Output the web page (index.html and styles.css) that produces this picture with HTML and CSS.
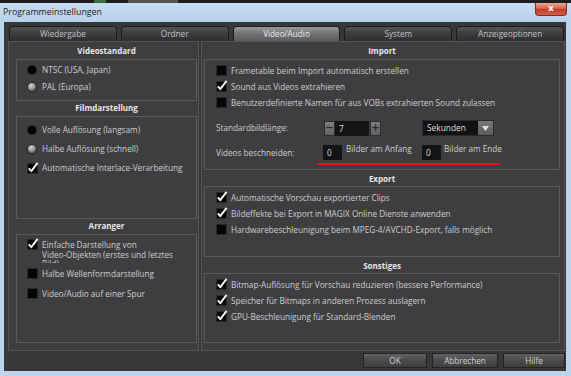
FILE: index.html
```html
<!DOCTYPE html>
<html>
<head>
<meta charset="utf-8">
<title>Programmeinstellungen</title>
<link rel="stylesheet" href="styles.css">
</head>
<body>
<div class="desk"><span class="desk-a"></span><span class="desk-b"></span></div>
<div class="titlebar">
  <span class="title">Programmeinstellungen</span>
  <div class="close">x</div>
</div>
<div class="client">
  <div class="tabs">
    <div class="tab">Wiedergabe</div>
    <div class="tab">Ordner</div>
    <div class="tab active">Video/Audio</div>
    <div class="tab">System</div>
    <div class="tab">Anzeigeoptionen</div>
  </div>
  <div class="content">
    <div class="panel left">
      <div class="hdr">Videostandard</div>
      <div class="group g-std">
        <div class="row r17"><svg class="radio" width="10" height="10" viewBox="0 0 10 10"><circle cx="5" cy="5" r="4.6" fill="#000" stroke="#2a2a2a" stroke-width="0.6"/></svg>NTSC (USA, Japan)</div>
        <div class="row r17"><svg class="radio" width="10" height="10" viewBox="0 0 10 10"><defs><radialGradient id="rg1" cx="0.4" cy="0.35" r="0.7"><stop offset="0" stop-color="#d4d4d4"/><stop offset="0.6" stop-color="#8a8a8a"/><stop offset="1" stop-color="#4a4a4a"/></radialGradient></defs><circle cx="5" cy="5" r="4.6" fill="url(#rg1)" stroke="#1a1a1a" stroke-width="0.8"/></svg>PAL (Europa)</div>
      </div>
      <div class="hdr">Filmdarstellung</div>
      <div class="group g-film">
        <div class="row r19"><svg class="radio" width="10" height="10" viewBox="0 0 10 10"><circle cx="5" cy="5" r="4.6" fill="#000" stroke="#2a2a2a" stroke-width="0.6"/></svg>Volle Auflösung (langsam)</div>
        <div class="row r19"><svg class="radio" width="10" height="10" viewBox="0 0 10 10"><circle cx="5" cy="5" r="4.6" fill="url(#rg1)" stroke="#1a1a1a" stroke-width="0.8"/></svg>Halbe Auflösung (schnell)</div>
        <div class="row r19"><svg class="cb" width="12" height="12" viewBox="0 0 12 12"><rect x="0.5" y="1.5" width="10" height="10" fill="#050505" stroke="#2a2a2a"/><path d="M1.8 6.4 L4.3 9.2 L10.6 0.9" fill="none" stroke="#f2f2f2" stroke-width="2" stroke-linejoin="round"/></svg>Automatische Interlace-Verarbeitung</div>
      </div>
      <div class="hdr">Arranger</div>
      <div class="group g-arr">
        <div class="row r26 top"><svg class="cb cb-top" width="12" height="12" viewBox="0 0 12 12"><rect x="0.5" y="1.5" width="10" height="10" fill="#050505" stroke="#2a2a2a"/><path d="M1.8 6.4 L4.3 9.2 L10.6 0.9" fill="none" stroke="#f2f2f2" stroke-width="2" stroke-linejoin="round"/></svg><span class="multi">Einfache Darstellung von<br>Video-Objekten (erstes und letztes<br>Bild)</span></div>
        <div class="row r20"><svg class="cb" width="12" height="12" viewBox="0 0 12 12"><rect x="0.5" y="1.5" width="10" height="10" fill="#050505" stroke="#2a2a2a"/></svg>Halbe Wellenformdarstellung</div>
        <div class="row r20"><svg class="cb" width="12" height="12" viewBox="0 0 12 12"><rect x="0.5" y="1.5" width="10" height="10" fill="#050505" stroke="#2a2a2a"/></svg>Video/Audio auf einer Spur</div>
      </div>
    </div>
    <div class="panel right">
      <div class="hdr">Import</div>
      <div class="group g-imp">
        <div class="row r16"><svg class="cb" width="12" height="12" viewBox="0 0 12 12"><rect x="0.5" y="1.5" width="10" height="10" fill="#050505" stroke="#2a2a2a"/></svg>Frametable beim Import automatisch erstellen</div>
        <div class="row r16"><svg class="cb" width="12" height="12" viewBox="0 0 12 12"><rect x="0.5" y="1.5" width="10" height="10" fill="#050505" stroke="#2a2a2a"/><path d="M1.8 6.4 L4.3 9.2 L10.6 0.9" fill="none" stroke="#f2f2f2" stroke-width="2" stroke-linejoin="round"/></svg>Sound aus Videos extrahieren</div>
        <div class="row r16"><svg class="cb" width="12" height="12" viewBox="0 0 12 12"><rect x="0.5" y="1.5" width="10" height="10" fill="#050505" stroke="#2a2a2a"/></svg>Benutzerdefinierte Namen für aus VOBs extrahierten Sound zulassen</div>
        <div class="row r16 sbl">
          <span class="lbl lbl-sbl">Standardbildlänge:</span>
          <span class="spinbtn">−</span><span class="field field-spin">7</span><span class="spinbtn plus">+</span>
          <span class="dropdown"><span class="dd-text">Sekunden</span><span class="dd-btn"><svg width="7" height="5" viewBox="0 0 7 5"><path d="M0 0 H7 L3.5 5 Z" fill="#e4e4e4"/></svg></span></span>
        </div>
        <div class="row r16 vb">
          <span class="lbl lbl-vb">Videos beschneiden:</span>
          <span class="field field-sm">0</span><span class="after after-a">Bilder am Anfang</span>
          <span class="field field-sm">0</span><span class="after after-e">Bilder am Ende</span>
        </div>
        <div class="redline"></div>
      </div>
      <div class="hdr hdr-r">Export</div>
      <div class="group g-exp">
        <div class="row r16"><svg class="cb" width="12" height="12" viewBox="0 0 12 12"><rect x="0.5" y="1.5" width="10" height="10" fill="#050505" stroke="#2a2a2a"/><path d="M1.8 6.4 L4.3 9.2 L10.6 0.9" fill="none" stroke="#f2f2f2" stroke-width="2" stroke-linejoin="round"/></svg>Automatische Vorschau exportierter Clips</div>
        <div class="row r16"><svg class="cb" width="12" height="12" viewBox="0 0 12 12"><rect x="0.5" y="1.5" width="10" height="10" fill="#050505" stroke="#2a2a2a"/><path d="M1.8 6.4 L4.3 9.2 L10.6 0.9" fill="none" stroke="#f2f2f2" stroke-width="2" stroke-linejoin="round"/></svg>Bildeffekte bei Export in MAGIX Online Dienste anwenden</div>
        <div class="row r16"><svg class="cb" width="12" height="12" viewBox="0 0 12 12"><rect x="0.5" y="1.5" width="10" height="10" fill="#050505" stroke="#2a2a2a"/></svg>Hardwarebeschleunigung beim MPEG-4/AVCHD-Export, falls möglich</div>
      </div>
      <div class="hdr hdr-r">Sonstiges</div>
      <div class="group g-son">
        <div class="row r16"><svg class="cb" width="12" height="12" viewBox="0 0 12 12"><rect x="0.5" y="1.5" width="10" height="10" fill="#050505" stroke="#2a2a2a"/><path d="M1.8 6.4 L4.3 9.2 L10.6 0.9" fill="none" stroke="#f2f2f2" stroke-width="2" stroke-linejoin="round"/></svg>Bitmap-Auflösung für Vorschau reduzieren (bessere Performance)</div>
        <div class="row r16"><svg class="cb" width="12" height="12" viewBox="0 0 12 12"><rect x="0.5" y="1.5" width="10" height="10" fill="#050505" stroke="#2a2a2a"/><path d="M1.8 6.4 L4.3 9.2 L10.6 0.9" fill="none" stroke="#f2f2f2" stroke-width="2" stroke-linejoin="round"/></svg>Speicher für Bitmaps in anderen Prozess auslagern</div>
        <div class="row r16"><svg class="cb" width="12" height="12" viewBox="0 0 12 12"><rect x="0.5" y="1.5" width="10" height="10" fill="#050505" stroke="#2a2a2a"/><path d="M1.8 6.4 L4.3 9.2 L10.6 0.9" fill="none" stroke="#f2f2f2" stroke-width="2" stroke-linejoin="round"/></svg>GPU-Beschleunigung für Standard-Blenden</div>
      </div>
    </div>
  </div>
  <div class="footer">
    <div class="btn btn-ok">OK</div>
    <div class="btn btn-ab">Abbrechen</div>
    <div class="btn btn-hi">Hilfe</div>
  </div>
</div>
</body>
</html>
```

FILE: styles.css
```css
* { box-sizing: border-box; }
html, body { margin: 0; padding: 0; }
body {
  width: 571px;
  height: 376px;
  overflow: hidden;
  background: #bcd4ec;
  font-family: "Open Sans", sans-serif;
  font-size: 8.2px;
  color: #cdcdcd;
}

/* desktop strip behind the window */
.desk { height: 3px; background: #1f1f21; display: flex; }
.desk-a { width: 12px; margin-left: 94px; background: #3d6b3c; }
.desk-b { width: 50px; margin-left: 22px; background: #555; }

/* title bar */
.titlebar {
  height: 19px;
  display: flex;
  align-items: flex-start;
  padding: 0 4px 0 3px;
  background: linear-gradient(#c8dcf1, #b9d1ea);
}
.title { font-size: 8.8px; line-height: 19px; color: #1b1b1b; }
.close {
  margin-left: auto;
  width: 32px;
  height: 13px;
  border: 1px solid #7e2b22;
  border-top: none;
  border-radius: 0 0 4px 4px;
  background: linear-gradient(#e9a896, #d86350 45%, #c23a27 55%, #d0604a);
  color: #fff;
  font-family: "DejaVu Sans", sans-serif;
  font-weight: bold;
  font-size: 9px;
  line-height: 11px;
  text-align: center;
}

/* client area */
.client {
  margin: 0 5px 0 4px;
  height: 349px;
  background: #38383a;
  display: flex;
  flex-direction: column;
}

.tabs { display: flex; gap: 4px; padding: 4px 2px 0 5px; height: 19px; }
.tab {
  flex: 1;
  height: 15px;
  border: 1px solid #1b1b1d;
  border-bottom: none;
  border-radius: 4px 4px 0 0;
  background: linear-gradient(#535356, #3c3c3f 50%, #2d2d2f);
  color: #c2c2c2;
  text-align: center;
  line-height: 14px;
}
.tab.active {
  background: linear-gradient(#9a9a9d, #707073 50%, #5d5d60);
  color: #eeeeee;
}

.content { display: flex; gap: 2px; margin: 0 1px 0 4px; height: 310px; }
.panel {
  border: 1px solid #545457;
  background: #3e3e41;
  padding-top: 2px;
  display: flex;
  flex-direction: column;
}
.left { width: 191px; padding-left: 7px; padding-right: 1px; }
.right { flex: 1; padding-left: 2px; padding-right: 4px; }

.hdr {
  height: 12px;
  line-height: 12px;
  text-align: center;
  font-weight: bold;
  font-size: 8px;
  color: #e6e6e6;
  margin: 1px 0 2px;
}
.hdr-r { margin: 3px 0 1px; }

.group { border: 1px solid #5a5a5d; display: flex; flex-direction: column; }
.g-std { height: 42px; padding-top: 1px; }
.g-film { height: 103px; padding-top: 3px; }
.g-arr { height: 109px; padding-top: 2px; }
.g-imp { height: 111px; padding-top: 2px; }
.g-exp { height: 71px; padding-top: 2px; }
.g-son { height: 70px; padding-top: 2px; }

.row { display: flex; align-items: center; white-space: nowrap; padding-left: 10px; }
.right .row { padding-left: 11px; }
.r16 { height: 16px; }
.r17 { height: 17px; }
.r19 { height: 19px; }
.r20 { height: 20px; }
.r26 { height: 26px; }
.row.top { align-items: flex-start; }

.radio { flex: none; margin-right: 5px; }
.cb { flex: none; margin-right: 3px; overflow: visible; }
.cb-top { margin-top: 1px; }
.multi {
  display: block;
  margin-top: 3px;
  height: 23px;
  line-height: 9.5px;
  overflow: hidden;
  white-space: nowrap;
}

/* import controls */
.sbl { margin-top: 10px; }
.vb { margin-top: 8px; align-items: flex-start; }
.lbl { flex: none; line-height: 16px; }
.lbl-sbl { width: 108px; }
.lbl-vb { width: 107px; line-height: 18px; }
.spinbtn {
  flex: none;
  width: 11px;
  height: 15px;
  background: linear-gradient(#7d7d80, #616164);
  border: 1px solid #2c2c2e;
  color: #2a2a2a;
  font-size: 10px;
  line-height: 12px;
  text-align: center;
  font-family: "DejaVu Sans", sans-serif;
  font-weight: bold;
}
.plus { margin-left: 1px; }
.field {
  flex: none;
  height: 15px;
  background: #141416;
  color: #dedede;
  line-height: 15px;
  padding-left: 4px;
}
.field-spin { width: 34px; }
.field-sm { width: 19px; margin-top: 1px; line-height: 16px; }
.dropdown {
  flex: none;
  display: flex;
  width: 72px;
  height: 16px;
  margin-left: 41px;
  background: #121214;
  border: 1px solid #2a2a2c;
}
.dd-text { flex: 1; padding-left: 4px; line-height: 14px; color: #dedede; font-size: 8.4px; }
.dd-btn {
  width: 15px;
  display: flex;
  align-items: center;
  justify-content: center;
  background: linear-gradient(#78787b, #5c5c5f);
}
.after { flex: none; line-height: 10px; }
.after-a { width: 76px; margin-left: 4px; }
.after-e { margin-left: 3px; }
.redline {
  width: 183px;
  height: 2px;
  margin: 3px 0 0 112px;
  background: #e0141c;
}

/* footer */
.footer { display: flex; justify-content: flex-end; gap: 5px; padding: 2px 1px 0 0; }
.btn {
  height: 15px;
  border: 1px solid #222224;
  background: linear-gradient(#626265, #4a4a4d 50%, #3f3f42);
  color: #d2d2d2;
  text-align: center;
  line-height: 13px;
}
.btn-ok { width: 64px; }
.btn-ab { width: 66px; }
.btn-hi { width: 62px; }
```
